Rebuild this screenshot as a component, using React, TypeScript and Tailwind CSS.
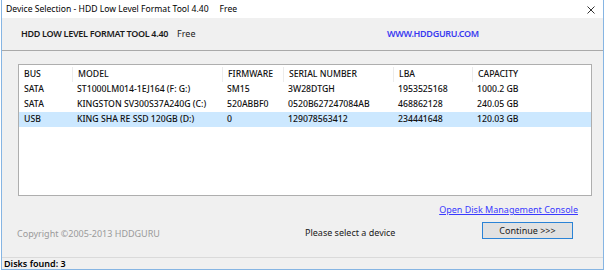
import React from 'react';

const font = { fontFamily: '"Noto Sans", "Open Sans", sans-serif' };

const columns = ['BUS', 'MODEL', 'FIRMWARE', 'SERIAL NUMBER', 'LBA', 'CAPACITY'];

const disks = [
  ['SATA', 'ST1000LM014-1EJ164 (F: G:)', 'SM15', '3W28DTGH', '1953525168', '1000.2 GB'],
  ['SATA', 'KINGSTON SV300S37A240G (C:)', '520ABBF0', '0520B627247084AB', '468862128', '240.05 GB'],
  ['USB', 'KING SHA RE SSD 120GB (D:)', '0', '129078563412', '234441648', '120.03 GB'],
];

const grid = 'grid grid-cols-[53px_150px_61px_110px_79px_1fr]';

export default function App() {
  return (
    <div className="w-[608px] h-[274px] bg-white overflow-hidden" style={font}>
      <div className="ml-[1px] w-[603px] h-[270px] flex flex-col border-x border-b border-[#86b5e3]">
        {/* title bar */}
        <div className="h-[18px] bg-white flex items-center justify-between pl-[4px] pr-[8px] text-[8.6px] text-black">
          <span className="whitespace-nowrap">
            Device Selection - HDD Low Level Format Tool 4.40
            <span className="ml-[11px]">Free</span>
          </span>
          <svg width="8" height="8" viewBox="0 0 8 8" className="mt-[1px]">
            <path d="M0.5 0.5L7.5 7.5M7.5 0.5L0.5 7.5" stroke="#333" strokeWidth="1" />
          </svg>
        </div>

        <div className="flex-1 flex flex-col bg-[#f0f0f0]">
          {/* header */}
          <div className="h-[33px] shrink-0 flex items-center border-b border-[#a9a9a9] text-[9px]">
            <span className="ml-[19px] w-[366px] whitespace-pre text-[#1a1a1a]">
              <span className="font-semibold tracking-[-0.3px]">HDD LOW LEVEL FORMAT TOOL 4.40</span>
              <span className="ml-[9px]">Free</span>
            </span>
            <span className="font-semibold tracking-[-0.3px] text-[#3a3af0]">WWW.HDDGURU.COM</span>
          </div>

          {/* device list */}
          <div className="mt-[13px] ml-[16px] w-[574px] h-[132px] bg-white border border-[#aeaeae] pt-[2px] text-[8.7px] font-medium text-[#111]">
            <div className={`${grid} h-[15px] items-center`}>
              {columns.map((c, i) => (
                <div key={c} className={`pl-[5px] leading-[15px] ${i > 0 ? 'border-l border-[#ececec]' : ''}`}>{c}</div>
              ))}
            </div>
            {disks.map((row, r) => (
              <div key={r} className={`${grid} h-[15px] items-center ${r === 2 ? 'bg-[#cce8ff]' : ''}`}>
                {row.map((v, i) => (
                  <div key={i} className="pl-[5px] leading-[15px] whitespace-nowrap">{v}</div>
                ))}
              </div>
            ))}
          </div>

          {/* actions */}
          <div className="flex justify-end pr-[25px] mt-[7px] text-[9px]">
            <span className="text-[#3a3aff] underline">Open Disk Management Console</span>
          </div>
          <div className="flex items-center mt-[4px] text-[9px]">
            <span className="ml-[15px] w-[288px] text-[#9a9a9a] mt-[6px]">Copyright ©2005-2013 HDDGURU</span>
            <span className="w-[177px] text-[#1a1a1a] mt-[4px]">Please select a device</span>
            <button className="w-[91px] h-[17px] border border-[#2a83d6] bg-[#e1e1e1] text-[9px] text-[#1a1a1a] leading-none">Continue &gt;&gt;&gt;</button>
          </div>

          <div className="flex-1" />
          {/* status bar */}
          <div className="h-[12px] border-t border-[#dadada] flex items-center pl-[2px] text-[9px] font-semibold text-black">
            Disks found: 3
          </div>
        </div>
      </div>
    </div>
  );
}
